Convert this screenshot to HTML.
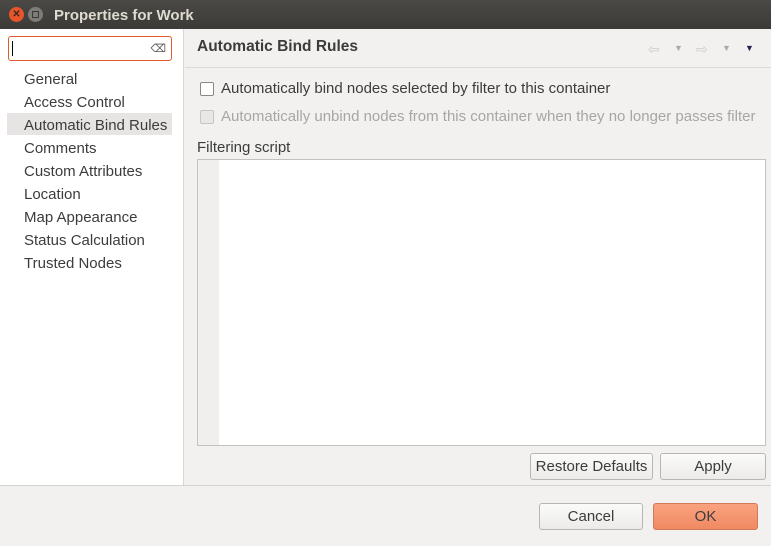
<!DOCTYPE html>
<html><head><style>
*{box-sizing:border-box;margin:0;padding:0}
body{width:771px;height:546px;background:#f2f1f0;font-family:"DejaVu Sans","Liberation Sans",sans-serif;font-size:15px;color:#3c3c3c;position:relative;overflow:hidden}
body{font-family:"Liberation Sans",sans-serif}
.abs{position:absolute}
.title{left:0;top:0;width:771px;height:29px;background:linear-gradient(#4a4945,#3b3a36);color:#dfdbd2;font-weight:bold;font-size:15px}
.left{left:0;top:29px;width:184px;height:456px;background:#fff;border-right:1px solid #d8d6d3}
.item{position:absolute;left:24px;font-size:15px;color:#3c3c3c}
.btn{position:absolute;height:27px;border:1px solid #b9b6b1;border-radius:3px;background:linear-gradient(#fbfbfa,#ecebe9);text-align:center;line-height:25px;font-size:15px;color:#3c3c3c}
.cb{position:absolute;width:14px;height:14px;border:1px solid #8a8884;border-radius:2px;background:#fff}
</style></head><body>
<div class="abs title">
 <div class="abs" style="left:9px;top:7px;width:15px;height:15px;border-radius:50%;background:#e8552a;color:#3a2a20;font-size:10px;line-height:15px;text-align:center">✕</div>
 <div class="abs" style="left:28px;top:7px;width:15px;height:15px;border-radius:50%;background:#7d7c78"><div class="abs" style="left:4px;top:4px;width:7px;height:7px;border:1px solid #3b3a36"></div></div>
 <div class="abs" style="left:54px;top:7px">Properties for Work</div>
</div>
<div class="abs left">
 <div class="abs" style="left:8px;top:7px;width:164px;height:25px;border:1px solid #e0592a;border-radius:3px;background:#fff"><div class="abs" style="left:3px;top:4px;width:1px;height:15px;background:#000"></div><div class="abs" style="right:5px;top:5px;font-size:11px;color:#555">⌫</div></div>
 <div class="item" style="top:42px">General</div>
 <div class="item" style="top:65px">Access Control</div>
 <div class="abs" style="left:7px;top:84px;width:165px;height:22px;background:#e6e5e3"></div>
 <div class="item" style="top:88px">Automatic Bind Rules</div>
 <div class="item" style="top:111px">Comments</div>
 <div class="item" style="top:134px">Custom Attributes</div>
 <div class="item" style="top:157px">Location</div>
 <div class="item" style="top:180px">Map Appearance</div>
 <div class="item" style="top:203px">Status Calculation</div>
 <div class="item" style="top:226px">Trusted Nodes</div>
</div>
<div class="abs" style="left:197px;top:38px;font-weight:bold;font-size:15.5px">Automatic Bind Rules</div>
<div class="abs" style="left:648px;top:41px;color:#ccc;font-size:14px">⇦</div>
<div class="abs" style="left:674px;top:43px;color:#aaa;font-size:9px">▼</div>
<div class="abs" style="left:696px;top:41px;color:#ccc;font-size:14px">⇨</div>
<div class="abs" style="left:722px;top:43px;color:#aaa;font-size:9px">▼</div>
<div class="abs" style="left:745px;top:43px;color:#25244a;font-size:9px">▼</div>
<div class="abs" style="left:185px;top:67px;width:586px;height:1px;background:#dcdad6"></div>
<div class="cb" style="left:200px;top:82px"></div>
<div class="abs" style="left:221px;top:80px">Automatically bind nodes selected by filter to this container</div>
<div class="cb" style="left:200px;top:110px;background:#e8e7e5;border-color:#c8c6c2"></div>
<div class="abs" style="left:221px;top:108px;color:#a8a6a2">Automatically unbind nodes from this container when they no longer passes filter</div>
<div class="abs" style="left:197px;top:139px">Filtering script</div>
<div class="abs" style="left:197px;top:159px;width:569px;height:287px;border:1px solid #c4c2be;background:#fff"><div class="abs" style="left:0;top:0;width:21px;height:285px;background:#f0efed"></div></div>
<div class="btn" style="left:530px;top:453px;width:123px">Restore Defaults</div>
<div class="btn" style="left:660px;top:453px;width:106px">Apply</div>
<div class="abs" style="left:0;top:485px;width:771px;height:1px;background:#d6d4d0"></div>
<div class="btn" style="left:539px;top:503px;width:104px">Cancel</div>
<div class="btn" style="left:653px;top:503px;width:105px;background:linear-gradient(#f9a27f,#f08a62);border-color:#d07a58">OK</div>
</body></html>
